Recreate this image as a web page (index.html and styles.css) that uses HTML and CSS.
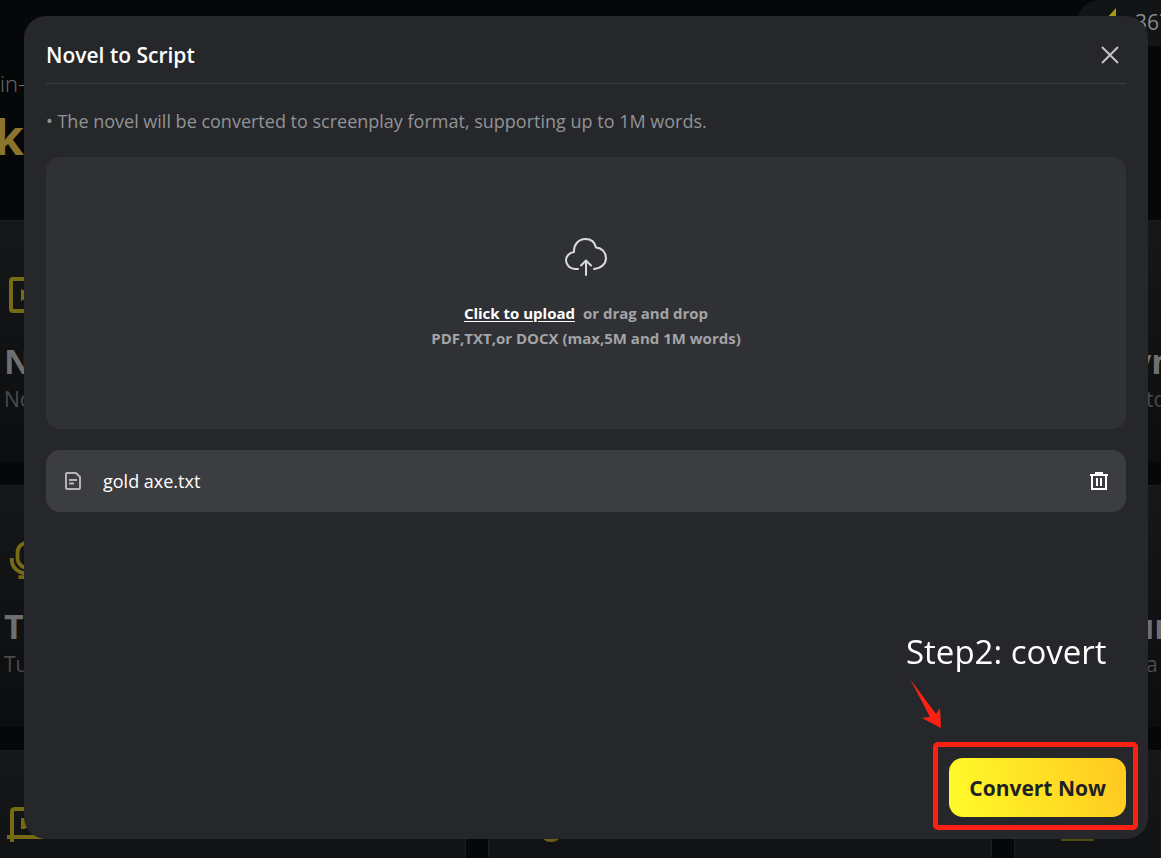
FILE: index.html
```
<!DOCTYPE html>
<html lang="en">
<head>
<meta charset="utf-8">
<title>Novel to Script</title>
<link rel="stylesheet" href="styles.css">
</head>
<body>
<div class="page">
  <header class="topbar">
    <div class="credits">
      <svg class="bolt" viewBox="0 0 14 20"><path d="M11 0 0 12h5l-2 8 11-12h-3z" fill="#a89a10"/></svg>
      <span>367</span>
    </div>
  </header>
  <section class="hero">
    <p class="hero-sub">in-o</p>
    <p class="hero-title">ky</p>
  </section>
  <section class="cards">
    <article class="card card-start">
      <svg class="card-icon" viewBox="0 0 36 36"><rect x="2" y="2" width="32" height="32" rx="2"/><path class="fill" d="M12 12l12 6-12 6z"/></svg>
      <h2>No</h2><p>No</p>
    </article>
    <article class="card"></article>
    <article class="card card-end"><span class="card-icon"></span><h2>yn</h2><p>to</p></article>

    <article class="card card-start">
      <svg class="card-icon" viewBox="0 0 36 40"><rect x="8" y="2" width="20" height="26" rx="10"/><path d="M2 18v2c0 8 7 14 16 14s16-6 16-14v-2M18 34v4M9 38h18"/></svg>
      <h2>Te</h2><p>Tur</p>
    </article>
    <article class="card"></article>
    <article class="card card-end"><span class="card-icon"></span><h2>un</h2><p>a s</p></article>

    <article class="card card-start">
      <svg class="card-icon card-icon-wide" viewBox="0 0 40 36"><path d="M6 35V5q0-3 3-3h26q3 0 3 3v25M1 30h36M17 11v8h8M17 11v11"/></svg>
    </article>
    <article class="card card-middle"><span class="dot"></span></article>
    <article class="card card-last"><span class="dash"></span></article>
  </section>
</div>

<main class="modal" role="dialog" aria-labelledby="title">
  <header class="modal-head">
    <h1 id="title">Novel to Script</h1>
    <button class="icon-button close" type="button" aria-label="Close">
      <svg width="18" height="18" viewBox="0 0 18 18"><path d="M1 1l16 16M17 1L1 17"/></svg>
    </button>
  </header>
  <p class="note">• The novel will be converted to screenplay format, supporting up to 1M words.</p>
  <section class="dropzone">
    <svg class="cloud" width="44" height="40" viewBox="0 0 44 40"><path d="M14 32h-3A9 9 0 0 1 2 23.500C2 19 5.500 15.500 10 15 9.500 7 15 2 21.500 2 28 2 31 6 32 10.500 38 11 42 15.500 42 21 42 27 37 31.500 30 32M22 38V24M17 28.500l5-5 5 5"/></svg>
    <p><a href="#upload">Click to upload</a><span>or drag and drop</span></p>
    <p>PDF,TXT,or DOCX (max,5M and 1M words)</p>
  </section>
  <div class="file">
    <svg class="doc" width="16" height="18" viewBox="0 0 16 18"><path d="M2 1h9l4 4v11q0 1-1 1H2q-1 0-1-1V2q0-1 1-1zM4 8h8M4 11.500h5"/></svg>
    <span class="file-name">gold axe.txt</span>
    <button class="icon-button trash" type="button" aria-label="Delete file">
      <svg width="18" height="18" viewBox="0 0 18 18"><path d="M0 3h18M5 1h8M2 3v14h14V3M7 6v8M11 6v8"/></svg>
    </button>
  </div>
  <footer class="modal-foot">
    <button class="convert" type="button">Convert Now</button>
  </footer>
</main>

<div class="callout">
  <p>Step2: covert</p>
  <svg class="arrow" width="34" height="50" viewBox="0 0 34 50"><path d="M1 0L27 35 31 29 32 49 13 39 21 38z"/></svg>
  <div class="highlight"></div>
</div>
</body>
</html>
```
FILE: styles.css
```
* { box-sizing: border-box; }
body, h1, h2, p { margin: 0; }
body {
  height: 100vh;
  overflow: hidden;
  background: #060709;
  color: #fff;
  font-family: "Open Sans", "Noto Sans", sans-serif;
}
svg { fill: none; }

.page { height: 100vh; overflow: hidden; }
.topbar { display: flex; justify-content: flex-end; height: 46px; }
.credits {
  display: flex;
  gap: 16px;
  width: 84px;
  padding: 8px 0 0 28px;
  border-radius: 23px 0 0 23px;
  background: #121415;
  color: #8a8a8a;
  font-size: 21px;
  line-height: 28px;
  white-space: nowrap;
}
.bolt { flex: none; width: 14px; height: 20px; }
.hero { height: 174px; padding-top: 23px; white-space: nowrap; }
.hero-sub { color: #6d6e70; font-size: 22px; font-weight: 300; line-height: 28px; }
.hero-title { margin-left: -6px; color: #8b742b; font-size: 48px; font-weight: 700; line-height: 80px; }

.cards {
  display: grid;
  grid-template-columns: 466fr 504fr 147fr;
  grid-auto-rows: 242px;
  gap: 23px 22px;
}
.card {
  overflow: hidden;
  border: 1px solid #1d1e20;
  border-bottom: 0;
  background: linear-gradient(#161718, #0c0d0f);
  white-space: nowrap;
}
.card-start { padding: 55px 4px 0; border-left: 0; }
.card-end { padding: 55px 0 0 131px; border-right: 0; }
.card-icon { display: block; width: 36px; height: 38px; margin-left: 5px; stroke: #766b12; stroke-width: 4; }
.card-icon-wide { width: 40px; margin-left: 2px; }
.card-icon .fill { fill: #766b12; stroke: none; }
.card h2 { margin-top: 25px; color: #6f6f70; font-size: 34px; font-weight: 700; line-height: 44px; }
.card-end h2 { margin-left: -14px; }
.card p { color: #4a4b4c; font-size: 21px; line-height: 32px; }
.card-middle { padding: 67px 0 0 50px; }
.card-last { padding: 84px 0 0 46px; }
.dot { display: block; width: 24px; height: 24px; border-radius: 50%; background: #6c5f13; }
.dash { display: block; width: 33px; height: 6px; background: #4f4912; }

.modal {
  position: fixed;
  inset: 16px 13px 19px 24px;
  display: flex;
  flex-direction: column;
  padding: 0 22px 22px;
  border-radius: 22px;
  background: #26272b;
}
.modal-head {
  display: flex;
  align-items: center;
  justify-content: space-between;
  height: 68px;
  padding: 10px 7px 0 0;
  border-bottom: 1px solid #3e3f43;
}
.modal-head h1 { font-size: 21px; font-weight: 600; line-height: 30px; }
.icon-button { display: flex; padding: 0; border: 0; background: none; cursor: pointer; }
.close svg { stroke: #c4c4c6; stroke-width: 2; }
.note { margin-top: 23px; color: #929395; font-size: 18px; line-height: 28px; }
.dropzone {
  display: flex;
  flex-direction: column;
  align-items: center;
  height: 272px;
  margin-top: 22px;
  padding-top: 80px;
  border-radius: 14px;
  background: #303135;
  color: #a3a4a6;
  font-size: 15px;
  font-weight: 700;
  line-height: 25px;
}
.cloud { margin-bottom: 24px; stroke: #dadbdc; stroke-width: 2; stroke-linecap: round; stroke-linejoin: round; }
.dropzone a { margin-right: 8px; color: #fff; text-underline-offset: 2px; }
.file {
  display: flex;
  align-items: center;
  height: 62px;
  margin-top: 21px;
  padding: 0 18px 0 19px;
  border-radius: 14px;
  background: #3c3d40;
}
.doc { stroke: #b5b5b7; stroke-width: 2; }
.file-name { flex: 1; margin-left: 22px; font-size: 18px; line-height: 28px; }
.trash svg { stroke: #fff; stroke-width: 2; }
.modal-foot { display: flex; justify-content: flex-end; margin-top: auto; }
.convert {
  height: 59px;
  padding: 0 20px;
  border: 0;
  border-radius: 14px;
  background: linear-gradient(75deg, #fffb29, #ffc820);
  color: #1f2225;
  font: 700 21px "Open Sans", "Noto Sans", sans-serif;
  cursor: pointer;
}

.callout {
  position: fixed;
  right: 23px;
  bottom: 28px;
  width: 205px;
  pointer-events: none;
}
.callout p { margin: 0 0 3px -27px; font-size: 33px; line-height: 48px; white-space: nowrap; }
.arrow { display: block; margin-left: -24px; fill: #ff2014; }
.highlight { height: 88px; margin-top: 13px; border: 5px solid #ff2014; border-radius: 5px; }
```
